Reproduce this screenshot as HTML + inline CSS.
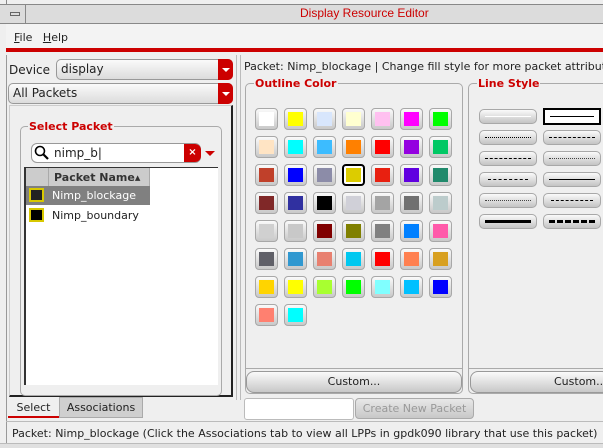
<!DOCTYPE html><html><head><style>
*{box-sizing:border-box;margin:0;padding:0}
body{width:603px;height:448px;background:#efefef;font-family:"DejaVu Sans","Liberation Sans",sans-serif;font-size:11px;color:#222;position:relative;overflow:hidden}
.a{position:absolute}
.sw{position:absolute;width:23px;height:22px;border:1px solid #a8a8a8;border-radius:4px;background:linear-gradient(#fafafa,#c8c8c8)}
.sw i{position:absolute;left:3px;top:3px;width:15px;height:14px}
.lb{position:absolute;width:58px;height:15px;border:1px solid #a8a8a8;border-radius:5px;background:linear-gradient(#fafafa,#c4c4c4)}
.lb i{position:absolute;left:5px;right:5px;top:6px;height:0}
.btn{position:absolute;border:1px solid #999;border-radius:8px;background:linear-gradient(#fafafa,#c8c8c8);text-align:center}
.dd{position:absolute;border:1px solid #999;border-radius:5px;background:linear-gradient(#fafafa,#dcdcdc);height:21px;font-size:12px;line-height:19px;padding-left:4px}
.dd b{position:absolute;right:-1px;top:-1px;width:15px;height:21px;background:#c00;border-radius:0 5px 5px 0}
.dd b:after{content:"";position:absolute;left:4px;top:9px;border-left:4px solid transparent;border-right:4px solid transparent;border-top:4px solid #fff}
.gt{position:absolute;color:#c00;font-weight:bold;font-size:11px;background:#efefef;padding:0 1px}
</style></head><body>
<div class="a" style="left:0;top:0;width:603px;height:4px;background:#efefef"></div>
<div class="a" style="left:6px;top:0;width:1px;height:24px;background:#888"></div>
<div class="a" style="left:0;top:4px;width:603px;height:20px;background:#dcdcdc;border-top:1px solid #888;border-bottom:1px solid #888"></div>
<div class="a" style="left:25px;top:4px;width:1px;height:20px;background:#888"></div>
<div class="a" style="left:10px;top:12px;width:10px;height:4px;border:1px solid #666"></div>
<div class="a" style="left:300px;top:6px;color:#c00;font-size:12px;font-family:'Liberation Sans',sans-serif">Display Resource Editor</div>
<div class="a" style="left:6px;top:24px;width:597px;height:24px;background:#f3f3f3"></div>
<div class="a" style="left:14px;top:31px;font-size:11px"><u>F</u>ile &nbsp; <u>H</u>elp</div>
<div class="a" style="left:6px;top:48px;width:597px;height:4px;background:#c00"></div>
<div class="a" style="left:6px;top:55px;width:1px;height:393px;background:#999"></div>
<div class="a" style="left:236px;top:55px;width:1px;height:345px;background:#bbb"></div>
<div class="a" style="left:240px;top:55px;width:1px;height:345px;background:#bbb"></div>
<div class="a" style="left:9px;top:63px;font-size:12px">Device</div>
<div class="dd" style="left:56px;top:59px;width:177px">display<b></b></div>
<div class="dd" style="left:8px;top:83px;width:225px;border-radius:5px">All Packets<b></b></div>
<div class="a" style="left:9px;top:105px;width:224px;height:292px;border-right:2px solid #222;border-bottom:2px solid #222;border-left:1px solid #ccc;border-top:1px solid #ccc"></div>
<div class="a" style="left:20px;top:126px;width:202px;height:270px;border:1px solid #aaa;border-radius:5px"></div>
<div class="gt" style="left:28px;top:120px;font-size:11px">Select Packet</div>
<div class="a" style="left:31px;top:143px;width:170px;height:20px;border:1px solid #999;border-radius:6px;background:#fff"></div>
<svg class="a" style="left:34px;top:145px" width="16" height="16"><circle cx="6" cy="6" r="4.5" fill="none" stroke="#000" stroke-width="1.6"/><line x1="9" y1="9" x2="14" y2="14" stroke="#000" stroke-width="2.2"/></svg>
<div class="a" style="left:54px;top:146px;font-size:12px">nimp_b|</div>
<div class="a" style="left:184px;top:144px;width:17px;height:18px;background:#c00;border-radius:0 6px 6px 0;color:#fff;font-size:10px;text-align:center;line-height:18px;font-weight:bold">×</div>
<div class="a" style="left:205px;top:151px;border-left:5px solid transparent;border-right:5px solid transparent;border-top:5px solid #c00"></div>
<div class="a" style="left:24px;top:167px;width:194px;height:218px;background:#fff;border-left:2px solid #333;border-top:1px solid #333"></div>
<div class="a" style="left:26px;top:168px;width:123px;height:18px;background:#ccc"></div>
<div class="a" style="left:48px;top:168px;width:1px;height:18px;background:#aaa"></div>
<div class="a" style="left:149px;top:168px;width:1px;height:18px;background:#aaa"></div>
<div class="a" style="left:54px;top:171px;font-weight:bold;color:#333;font-size:11px">Packet Name▴</div>
<div class="a" style="left:26px;top:186px;width:124px;height:19px;background:#808080"></div>
<div class="a" style="left:29px;top:188px;width:15px;height:14px;border:2px solid #d8c800;background:#222"></div>
<div class="a" style="left:52px;top:189px;color:#fff;font-size:11px">Nimp_blockage</div>
<div class="a" style="left:29px;top:208px;width:15px;height:14px;border:2px solid #d8c800;background:#000"></div>
<div class="a" style="left:52px;top:209px;font-size:11px">Nimp_boundary</div>
<div class="a" style="left:8px;top:398px;width:51px;height:20px;border-bottom:2px solid #c00;text-align:center;line-height:20px">Select</div>
<div class="a" style="left:59px;top:397px;width:84px;height:21px;background:#cfcfcf;border:1px solid #aaa;text-align:center;line-height:19px">Associations</div>
<div class="a" style="left:6px;top:421px;width:597px;height:1px;background:#bbb"></div>
<div class="a" style="left:12px;top:427px;font-size:11px">Packet: Nimp_blockage (Click the Associations tab to view all LPPs in gpdk090 library that use this packet)</div>
<div class="a" style="left:0;top:443px;width:603px;height:5px;background:#e0e0e0;border-top:1px solid #bbb"></div>
<div class="a" style="left:244px;top:60px;font-size:11px;white-space:nowrap">Packet: Nimp_blockage | Change fill style for more packet attributes</div>
<div class="a" style="left:245px;top:83px;width:218px;height:311px;border:1px solid #aaa;border-radius:5px"></div>
<div class="a" style="left:246px;top:368px;width:216px;height:1px;background:#aaa"></div>
<div class="gt" style="left:254px;top:77px">Outline Color</div>
<div class="btn" style="left:246px;top:371px;width:216px;height:22px;line-height:20px">Custom...</div>
<div class="a" style="left:468px;top:83px;width:140px;height:311px;border:1px solid #aaa;border-radius:5px"></div>
<div class="a" style="left:469px;top:368px;width:140px;height:1px;background:#aaa"></div>
<div class="gt" style="left:477px;top:77px">Line Style</div>
<div class="btn" style="left:470px;top:371px;width:140px;height:22px;line-height:20px;text-align:left;padding-left:83px">Custom...</div>
<div class="a" style="left:244px;top:398px;width:110px;height:22px;background:#fff;border:1px solid #bbb;border-radius:3px"></div>
<div class="a" style="left:355px;top:398px;width:119px;height:21px;border:1px solid #aaa;border-radius:4px;background:linear-gradient(#e8e8e8,#c8c8c8);color:#999;text-align:center;line-height:19px">Create New Packet</div>
<div id="g"></div>
<div class="lb" style="left:479px;top:109px"><i style="border-top:1px solid #fff"></i></div>
<div class="a" style="left:543px;top:108px;width:58px;height:17px;border:2px solid #000;background:#fff"><i class="a" style="left:5px;right:5px;top:6px;border-top:1px solid #000"></i></div>
<div class="lb" style="left:479px;top:130px"><i style="border-top:1px dotted #000"></i></div>
<div class="lb" style="left:543px;top:130px"><i style="border-top:1px dashed #000"></i></div>
<div class="lb" style="left:479px;top:151px"><i style="border-top:1px dashed #000"></i></div>
<div class="lb" style="left:543px;top:151px"><i style="border-top:1px dotted #444"></i></div>
<div class="lb" style="left:479px;top:172px"><i style="border-top:1px dashed #000;left:8px;right:8px"></i></div>
<div class="lb" style="left:543px;top:172px"><i style="border-top:1px solid #000"></i></div>
<div class="lb" style="left:479px;top:193px"><i style="border-top:1px dotted #444"></i></div>
<div class="lb" style="left:543px;top:193px"><i style="border-top:1px dashed #000;left:7px;right:7px"></i></div>
<div class="lb" style="left:479px;top:214px"><i style="border-top:3px solid #000;top:5px"></i></div>
<div class="lb" style="left:543px;top:214px"><i style="border-top:3px dashed #000;top:5px"></i></div>
<script>
var c=[["#fff","#ff0","#d8e6fc","#ffffd0","#ffc0f0","#f0f","#0f0"],["#ffe4c4","#0ff","#3cbcff","#ff8000","#f00","#9400e0","#00c864"],["#c0402a","#00f","#8c8ca8","#dccc00","#e82010","#6000e0","#208a6c"],["#802828","#3030a0","#000","#d0d0d8","#a4a4a4","#707070","#bccccc"],["#d0d0d0","#c8c8c8","#800000","#808000","#808080","#0080ff","#ff5aaa"],["#606068","#3098d0","#e88070","#00c8f0","#f00","#ff8050","#d8a020"],["#ffd400","#ff0","#a8ff30","#0f0","#80ffff","#00c0ff","#00f"],["#ff8070","#0ff"]];
var h="";c.forEach(function(r,i){r.forEach(function(col,j){var x=255+j*29,y=108+i*28;var sel=(i==2&&j==3);h+='<div class="sw" style="left:'+x+'px;top:'+y+'px;'+(sel?'border:2px solid #000;background:#fff;':'')+'"><i style="background:'+col+(sel?';left:2px;top:2px':'')+'"></i></div>';});});
document.getElementById("g").innerHTML=h;
</script>
</body></html>
